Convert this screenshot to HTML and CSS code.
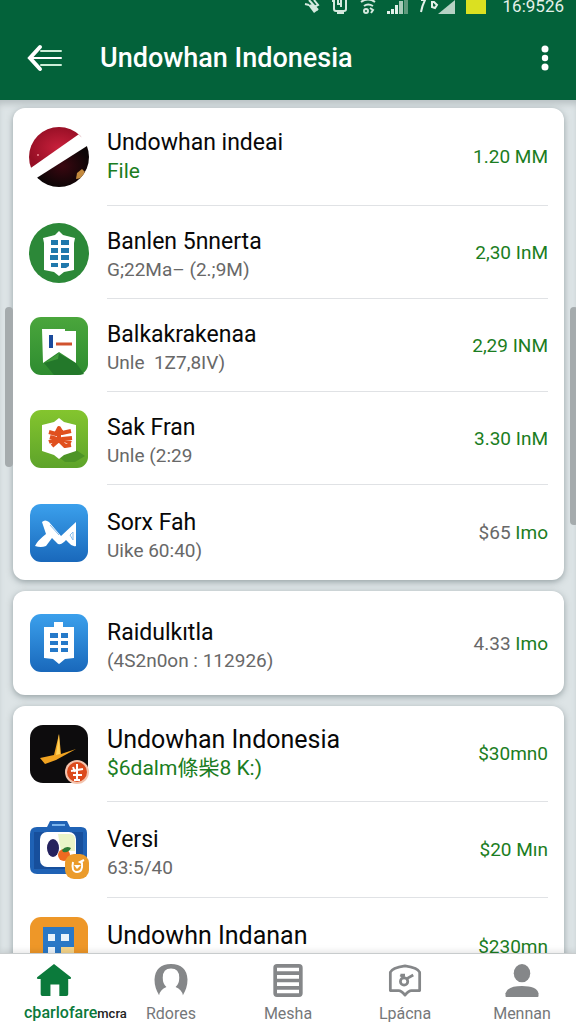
FILE: index.html
```html
<!DOCTYPE html>
<html lang="id">
<head>
    <meta charset="UTF-8">
    <meta name="viewport" content="width=device-width, initial-scale=1.0">
    <title>Undowhan Indonesia</title>
    <link rel="stylesheet" href="styles.css">
</head>
<body>
    <header class="header">
        <div class="status">
            <svg width="16" height="14" viewBox="0 0 16 14" fill="none" stroke="#d5eadf" stroke-width="2">
                <path d="M5 0l9 10M1 4l4 1M10 0l4 5-4 2"/>
                <path d="M4 5l6 8 4-3-5-6z" fill="#d5eadf" stroke="none"/>
            </svg>
            <svg width="18" height="14" viewBox="0 0 18 14" fill="none" stroke="#d5eadf" stroke-width="2">
                <path d="M1 1h2v8q0 2 2 2h8q2 0 2-2V0M6 13h7M10 0v7M7 0v4h4"/>
            </svg>
            <svg width="16" height="14" viewBox="0 0 16 14" fill="none" stroke="#d5eadf" stroke-width="2">
                <path d="M1 2q7-5 14 0M4 6q4-3 9 0"/>
                <circle cx="6" cy="11" r="2"/><path d="M10 8l3 2-2 3"/>
            </svg>
            <svg width="21" height="14" viewBox="0 0 21 14">
                <path fill="#e3f1e9" d="M0 11h3v3H0zM4 9h3v5H4zM8 5h3v9H8z"/>
                <path fill="#a9cbb9" d="M12 1h4v13h-4z"/>
                <path fill="#5f9a7d" d="M17 0h4v14h-4z"/>
            </svg>
            <svg width="36" height="14" viewBox="0 0 36 14">
                <path fill="none" stroke="#e3f1e9" stroke-width="2" d="M2 0h4Q3 6 2 12M13 2v5l3 1 2-3-3-3z"/>
                <path fill="#b5d2c4" d="M36 0v14H19z"/>
            </svg>
            <span class="battery"></span>
            <span class="clock">16:9526</span>
        </div>
        <div class="appbar">
            <button class="icon-btn" aria-label="Kembali">
                <svg width="36" height="28" viewBox="0 0 36 28" fill="none" stroke="#fff" stroke-linecap="round">
                    <path stroke-width="4" d="M13 3L3 14l10 11"/>
                    <path stroke-width="2" d="M4 14h30"/>
                    <path stroke-width="2" stroke="#cdeed8" d="M14 7h20M14 21h20"/>
                </svg>
            </button>
            <h1 class="appbar-title">Undowhan Indonesia</h1>
            <button class="icon-btn" aria-label="Menu">
                <svg width="8" height="26" viewBox="0 0 8 26" fill="#fff">
                    <circle cx="4" cy="4" r="3.5"/><circle cx="4" cy="13" r="3.2"/><circle cx="4" cy="22" r="3.5"/>
                </svg>
            </button>
        </div>
    </header>

    <main class="content">
        <ul class="card">
            <li class="row top">
                <svg class="row-icon" viewBox="0 0 58 58">
                    <defs>
                        <clipPath id="ball"><circle cx="29" cy="29" r="30"/></clipPath>
                        <radialGradient id="red"><stop offset="0" stop-color="#c9203c"/><stop offset="1" stop-color="#960f25"/></radialGradient>
                        <radialGradient id="dark"><stop offset="0" stop-color="#3a0710"/><stop offset="1" stop-color="#0c0506"/></radialGradient>
                    </defs>
                    <g clip-path="url(#ball)">
                        <path fill="url(#red)" d="M-2-2h62v6L-2 42z"/>
                        <path fill="#fff" d="M-2 42L52 4l10 10L-2 56z"/>
                        <path fill="url(#dark)" d="M5 51L60 16v44H5z"/>
                        <path fill="#c48a3e" d="M47 45l5-4 3 3-3 6-6 1z"/>
                        <circle cx="8" cy="27" r="1" fill="#f08a94"/>
                    </g>
                </svg>
                <div class="row-body">
                    <div class="row-text">
                        <h2 class="name">Undowhan indeai</h2>
                        <p class="sub green">File</p>
                    </div>
                    <span class="price">1.20 MM</span>
                </div>
            </li>
            <li class="row">
                <svg class="row-icon" viewBox="0 0 58 58">
                    <circle cx="29" cy="29" r="30" fill="#2c8838"/>
                    <path fill="#fff" d="M29 7l4 4 12 3-1 5v27l-10 2-5 4-5-4-10-2V19l-1-5 12-3z"/>
                    <path fill="#1f78ac" d="M21 16h7v5h-7zM31 16h8v5h-8zM21 24h7v5h-7zM31 24h8v5h-8zM20 31h8v5h-8zM31 31h8v5h-8zM21 39h7v4h-7zM31 39h8v3l-3 2h-5z"/>
                </svg>
                <div class="row-body">
                    <div class="row-text">
                        <h2 class="name">Banlen 5nnerta</h2>
                        <p class="sub">G;22Ma– (2.;9M)</p>
                    </div>
                    <span class="price">2,30 InM</span>
                </div>
            </li>
            <li class="row">
                <svg class="row-icon" viewBox="0 0 58 58">
                    <defs><linearGradient id="green" x2="0" y2="1"><stop offset="0" stop-color="#4aa63c"/><stop offset="1" stop-color="#2e8c30"/></linearGradient></defs>
                    <rect width="58" height="58" rx="11" fill="url(#green)"/>
                    <path fill="#23782a" d="M28 36l18 10 8 11q-3 1-7 1H24L14 46z"/>
                    <path fill="#3f9a3a" d="M29 36L14 46l14-4z"/>
                    <path fill="#fff" d="M12 12h23v2h11v32L29 35 13 46z"/>
                    <path stroke="#1b4a9c" stroke-width="4" d="M21 18v13"/>
                    <path stroke="#d0532f" stroke-width="3" d="M26 27h16"/>
                </svg>
                <div class="row-body">
                    <div class="row-text">
                        <h2 class="name">Balkakrakenaa</h2>
                        <p class="sub">Unle &nbsp;1Z7,8IV)</p>
                    </div>
                    <span class="price">2,29 INM</span>
                </div>
            </li>
            <li class="row">
                <svg class="row-icon" viewBox="0 0 58 58">
                    <defs><linearGradient id="lime" x2="0" y2="1"><stop offset="0" stop-color="#84c52e"/><stop offset="1" stop-color="#5da32a"/></linearGradient></defs>
                    <rect width="58" height="58" rx="11" fill="url(#lime)"/>
                    <path fill="#4d9426" d="M46 40l9 6-10 6H35l-6-5z"/>
                    <path fill="#fff" d="M29 8l5 4 12 3v26l-12 4-5 4-5-4-12-4V15l12-3z"/>
                    <path fill="none" stroke="#e0501e" stroke-width="4" stroke-linejoin="round" d="M19 22l7 2 3-6 3 5 9-2M19 32l8-3-7-2M42 28l-10 1 9 4M22 36l7-6 6 6 6-1M29 19v11"/>
                </svg>
                <div class="row-body">
                    <div class="row-text">
                        <h2 class="name">Sak Fran</h2>
                        <p class="sub">Unle (2:29</p>
                    </div>
                    <span class="price">3.30 InM</span>
                </div>
            </li>
            <li class="row">
                <svg class="row-icon" viewBox="0 0 58 58">
                    <defs><linearGradient id="blue" x2="0" y2="1"><stop offset="0" stop-color="#3ba0ec"/><stop offset="1" stop-color="#1968bb"/></linearGradient></defs>
                    <rect width="58" height="58" rx="11" fill="url(#blue)"/>
                    <path fill="#fff" d="M12 18q3-3 7 0l12 14 15-14v24q-4 1-7-3l-3-3q-4 5-8 4l-6-6-6 8q-5 2-11 0 2-5 11-12z"/>
                    <path fill="none" stroke="#86bdec" stroke-width="1" d="M20 21l9 10M40 31l3-3v8z"/>
                </svg>
                <div class="row-body">
                    <div class="row-text">
                        <h2 class="name">Sorx Fah</h2>
                        <p class="sub">Uike 60:40)</p>
                    </div>
                    <span class="price"><span class="gray">$65</span> Imo</span>
                </div>
            </li>
        </ul>

        <ul class="card single">
            <li class="row">
                <svg class="row-icon" viewBox="0 0 58 58">
                    <rect width="58" height="58" rx="11" fill="url(#blue)"/>
                    <path fill="#fff" d="M24 8h9v5h11v31l-9 1-6 5-6-5-9-1V13h10z"/>
                    <path fill="#2579c9" d="M20 19h8v5h-8zM31 19h7v5h-7zM20 27h8v4h-8zM31 27h7v4h-7zM20 34h8v4h-8zM31 34h7v4h-7z"/>
                </svg>
                <div class="row-body">
                    <div class="row-text">
                        <h2 class="name">Raidulkıtla</h2>
                        <p class="sub">(4S2n0on : 112926)</p>
                    </div>
                    <span class="price"><span class="gray">4.33</span> Imo</span>
                </div>
            </li>
        </ul>

        <ul class="card roomy">
            <li class="row top">
                <svg class="row-icon" viewBox="0 0 58 58">
                    <rect width="58" height="58" rx="13" fill="#0d0c0d"/>
                    <path fill="#f0a321" d="M29 9l2 20 15-5-20 11-11 4-5-6 14-3z"/>
                    <path fill="#ffd25a" d="M29 9l1 20-4 1z"/>
                    <circle cx="47" cy="47" r="12" fill="#f3c3ad"/>
                    <circle cx="47" cy="47" r="10" fill="#dc4a1c"/>
                    <path fill="none" stroke="#fff" stroke-width="2" d="M47 39v16M41 46l12-2M43 50h9M44 55h6M43 42l2 5"/>
                </svg>
                <div class="row-body">
                    <div class="row-text">
                        <h2 class="name large">Undowhan Indonesia</h2>
                        <p class="sub green">$6dalm條柴8 K:)</p>
                    </div>
                    <span class="price">$30mn0</span>
                </div>
            </li>
            <li class="row">
                <svg class="row-icon" viewBox="0 0 58 58">
                    <path fill="#1f62b5" d="M17 6l3-6h17l3 6h11q6 0 6 6v34q0 7-7 7H7q-7 0-7-7V13q0-7 7-7z"/>
                    <path stroke="#7ab4ec" stroke-width="2" d="M22 4h13"/>
                    <path fill="#174f9c" d="M4 11h49v37H4z"/>
                    <rect x="10" y="11" width="36" height="35" rx="7" fill="#fff"/>
                    <path fill="#eaf5c8" d="M28 13h12q5 0 5 6v11H31z"/>
                    <ellipse cx="23" cy="27" rx="6" ry="9" fill="#25225e"/>
                    <circle cx="34" cy="34" r="6" fill="#ee6a20"/>
                    <path fill="#2e7b35" d="M32 29q4-5 9-2-2 5-8 4z"/>
                    <rect x="35" y="33" width="24" height="25" rx="9" fill="#eb9b2b"/>
                    <path fill="none" stroke="#fff" stroke-width="2" d="M43 41q-2 10 4 10t5-9l-2-1 4-2"/>
                    <path fill="#fff" d="M44 44l3 4 4-4z"/>
                </svg>
                <div class="row-body">
                    <div class="row-text">
                        <h2 class="name">Versi</h2>
                        <p class="sub">63:5/40</p>
                    </div>
                    <span class="price">$20 Mın</span>
                </div>
            </li>
            <li class="row">
                <svg class="row-icon" viewBox="0 0 58 58">
                    <rect width="58" height="58" rx="11" fill="#ee9728"/>
                    <path fill="#2a78c6" d="M13 10h31v40H13z"/>
                    <path fill="#e9f3fb" d="M18 17h7v7h-7zM31 17h8v7h-8zM18 30h7v7h-7z"/>
                    <path fill="#f5d489" d="M31 30h13v10H31z"/>
                </svg>
                <div class="row-body">
                    <div class="row-text">
                        <h2 class="name large">Undowhn Indanan</h2>
                    </div>
                    <span class="price">$230mn</span>
                </div>
            </li>
        </ul>
        <span class="scrollbar left"></span>
        <span class="scrollbar right"></span>
    </main>

    <nav class="tabs">
        <a class="tab active" href="#">
            <svg width="40" height="36" viewBox="0 0 40 36"><path fill="#0b7a3b" d="M20 0l19 15q1 2-1 2h-2v17q0 2-2 2h-8V23H16v13H7q-2 0-2-2V17H2q-2 0-1-2z"/></svg>
            <span class="tab-label">cþarlofare<small>mcra</small></span>
        </a>
        <a class="tab" href="#">
            <svg width="36" height="36" viewBox="0 0 36 36"><path fill="#858789" d="M5 34Q0 26 0 17 1 0 18 0t18 17q0 9-5 17-1-6-8-9 4-3 4-10 0-10-9-10T9 15q0 7 4 10-7 3-8 9z"/></svg>
            <span class="tab-label">Rdores</span>
        </a>
        <a class="tab" href="#">
            <svg width="32" height="36" viewBox="0 0 32 36" fill="none" stroke="#858789" stroke-width="4"><rect x="2" y="2" width="28" height="32" rx="2"/><path d="M2 10h28M2 18h28M2 26h28"/></svg>
            <span class="tab-label">Mesha</span>
        </a>
        <a class="tab" href="#">
            <svg width="36" height="36" viewBox="0 0 36 36" fill="none" stroke="#858789" stroke-width="3" stroke-linejoin="round">
                <path d="M2 9Q4 4 18 2q14 2 16 7v20H25q-3 0-7 5-4-5-7-5H2z"/>
                <circle cx="17" cy="19" r="4"/><path d="M13 12l4 3M20 16l7-4M13 12h5"/>
            </svg>
            <span class="tab-label">Lpácna</span>
        </a>
        <a class="tab" href="#">
            <svg width="36" height="36" viewBox="0 0 36 36" fill="#858789"><ellipse cx="18" cy="10" rx="9" ry="10"/><path d="M0 35v-3q2-8 18-8t18 8v3q0 1-1 1H1q-1 0-1-1z"/></svg>
            <span class="tab-label">Mennan</span>
        </a>
    </nav>
</body>
</html>
```
FILE: styles.css
```css
* {
    box-sizing: border-box;
}

body {
    margin: 0;
    height: 100vh;
    display: flex;
    flex-direction: column;
    overflow: hidden;
    background-color: #dde4e6;
    font-family: Roboto, "Noto Sans CJK SC", sans-serif;
    color: #080808;
}

/* header */
.header {
    flex: none;
    background-color: #03623a;
    color: white;
}

.status {
    height: 16px;
    padding: 0 12px 2px 0;
    display: flex;
    justify-content: flex-end;
    align-items: flex-end;
    gap: 11px;
    overflow: hidden;
}

.battery {
    width: 20px;
    height: 14px;
    background-color: #dbe021;
}

.clock {
    margin-left: 6px;
    font-size: 17px;
    line-height: 16px;
    color: #e3f1e9;
}

.appbar {
    height: 84px;
    padding: 0 27px;
    display: flex;
    align-items: center;
}

.icon-btn {
    padding: 0;
    border: none;
    background: none;
    display: flex;
    cursor: pointer;
}

.appbar-title {
    flex: 1;
    margin: 0 0 0 37px;
    font-size: 27px;
    font-weight: 500;
}

/* list */
.content {
    position: relative;
    flex: 1;
    min-height: 0;
    overflow: hidden;
    padding: 8px 12px 0 13px;
    display: flex;
    flex-direction: column;
    gap: 11px;
    box-shadow: inset 0 6px 6px -2px #b9c2c4;
}

.card {
    flex: none;
    margin: 0;
    padding: 0;
    list-style: none;
    background-color: white;
    border-radius: 12px;
    box-shadow: 0 2px 6px rgba(80, 95, 100, 0.5);
}

.row {
    min-height: 93px;
    padding: 0 16px 0 17px;
    display: flex;
    gap: 19px;
}

.row:first-child {
    min-height: 98px;
}

.row:last-child {
    min-height: 95px;
}

.roomy .row {
    min-height: 96px;
}

.single .row {
    min-height: 104px;
}

.row-icon {
    flex: none;
    align-self: center;
    width: 58px;
    height: 58px;
    overflow: visible;
}

.row-body {
    flex: 1;
    display: flex;
    align-items: center;
    justify-content: space-between;
    border-bottom: 1px solid #e0e2e5;
}

.row:last-child .row-body {
    border-bottom: none;
}

.row-text {
    min-height: 64px;
    padding-top: 8px;
}

.top .row-text {
    min-height: 0;
    padding-top: 0;
}

.name {
    margin: 0;
    font-size: 23px;
    font-weight: 400;
    line-height: 28px;
}

.large {
    font-size: 25px;
}

.sub {
    margin: 0;
    font-size: 19px;
    line-height: 28px;
    color: #686868;
}

.green {
    font-size: 21px;
    color: #1b7d22;
}

.price {
    font-size: 19px;
    color: #1b7d22;
}

.gray {
    color: #686868;
}

.scrollbar {
    position: absolute;
    top: 207px;
    width: 8px;
    border-radius: 4px;
    background-color: #a5abad;
}

.left {
    left: 5px;
    height: 160px;
}

.right {
    right: -2px;
    height: 218px;
}

/* bottom tabs */
.tabs {
    position: relative;
    flex: none;
    height: 71px;
    padding: 10px 24px 0;
    display: flex;
    justify-content: space-between;
    background-color: white;
    border-top: 1px solid #c8cccd;
    box-shadow: 0 -2px 6px rgba(0, 0, 0, 0.1);
}

.tab {
    width: 60px;
    display: flex;
    flex-direction: column;
    align-items: center;
    gap: 7px;
    font-size: 16px;
    line-height: 20px;
    color: #757779;
    text-decoration: none;
    white-space: nowrap;
}

.active {
    color: #0b7a3b;
    font-weight: 500;
}

.active .tab-label {
    align-self: flex-start;
}

.active small {
    font-size: 13px;
    color: #222;
}
```
